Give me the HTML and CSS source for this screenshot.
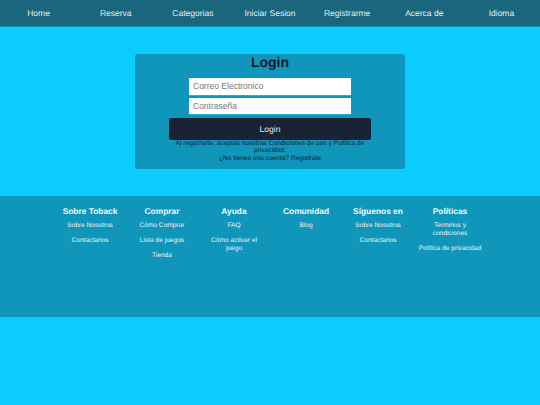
FILE: index.html
```html
<!DOCTYPE html>
<html lang="es">
<head>
<meta charset="utf-8">
<title>Login</title>
<link rel="stylesheet" href="styles.css">
</head>
<body>
<nav class="nav">
  <a>Home</a><a>Reserva</a><a>Categorias</a><a>Iniciar Sesion</a><a>Registrarme</a><a>Acerca de</a><a>Idioma</a>
</nav>
<main class="main">
  <form class="card">
    <h1 class="title">Login</h1>
    <input class="field" type="text" placeholder="Correo Electronico">
    <input class="field" type="text" placeholder="Contraseña">
    <button class="submit" type="button">Login</button>
    <p class="note">Al registrarte, aceptas nuestras Condiciones de uso y Política de privacidad.<br>¿No tienes una cuenta? Registrate</p>
  </form>
</main>
<footer class="footer">
  <div class="col"><h2>Sobre Toback</h2><a>Sobre Nosotros</a><a>Contactanos</a></div>
  <div class="col"><h2>Comprar</h2><a>Cómo Comprar</a><a>Lista de juegos</a><a>Tienda</a></div>
  <div class="col"><h2>Ayuda</h2><a>FAQ</a><a>Cómo activar el juego</a></div>
  <div class="col"><h2>Comunidad</h2><a>Blog</a></div>
  <div class="col"><h2>Síguenos en</h2><a>Sobre Nosotros</a><a>Contactanos</a></div>
  <div class="col"><h2>Políticas</h2><a>Terminos y condiciones</a><a>Política de privacidad</a></div>
</footer>
</body>
</html>
```
FILE: styles.css
```css
* { box-sizing: border-box; }
html, body { margin: 0; height: 100%; }
body {
  background: #0bcbff;
  font-family: "Liberation Sans", Arial, sans-serif;
  text-rendering: geometricPrecision;
  overflow: hidden;
}
.nav {
  display: grid;
  grid-template-columns: repeat(7, 1fr);
  height: 26.5px;
  background: #1a667c;
  border-bottom: 1px solid #1192b6;
  align-items: center;
}
.nav a {
  color: #e4eef2;
  font-size: 8.5px;
  text-align: center;
}
.main {
  display: flex;
  justify-content: center;
  padding-top: 27.5px;
}
.card {
  width: 270px;
  height: 115px;
  background: #1196bb;
  border-radius: 2.5px;
  display: flex;
  flex-direction: column;
  align-items: center;
}
.title {
  margin: 0 0 8px;
  font-size: 14px;
  line-height: 16px;
  font-weight: 700;
  color: #0a1a28;
}
.field {
  width: 162px;
  height: 17.5px;
  margin-bottom: 2px;
  padding: 0 4px;
  border: 0;
  border-bottom: 1px solid #20b0d0;
  border-radius: 0;
  background: #fff;
  font: 8.5px "Liberation Sans", Arial, sans-serif;
}
.field::placeholder { color: #777; opacity: 1; }
.submit {
  width: 202px;
  height: 22px;
  margin-top: 0.5px;
  border: 0;
  border-radius: 2px;
  background: #1a2236;
  color: #e8e8e8;
  font: 8.5px "Liberation Sans", Arial, sans-serif;
  text-rendering: geometricPrecision;
}
.note {
  margin: 0;
  width: 202px;
  font-size: 6.6px;
  line-height: 7.5px;
  text-align: center;
  color: #0a2030;
}
.footer {
  margin-top: 27px;
  height: 121px;
  background: #1196bb;
  padding: 10px 54px 0;
  display: grid;
  grid-template-columns: repeat(6, 72px);
  align-items: start;
}
.col {
  display: flex;
  flex-direction: column;
  align-items: center;
  text-align: center;
  padding: 0 11px;
  color: #e4f4f8;
}
.col h2 {
  margin: 0 0 6px;
  font-size: 8.4px;
  line-height: 10px;
  font-weight: 700;
  white-space: nowrap;
  color: #f2fafc;
}
.col a {
  font-size: 6.6px;
  line-height: 8px;
  margin-bottom: 7px;
}
.col:last-child { padding: 0; }
.col:last-child a:first-of-type { padding: 0 11px; }
.col:nth-child(1) a, .col:nth-child(2) a, .col:nth-child(5) a { white-space: nowrap; }
```
